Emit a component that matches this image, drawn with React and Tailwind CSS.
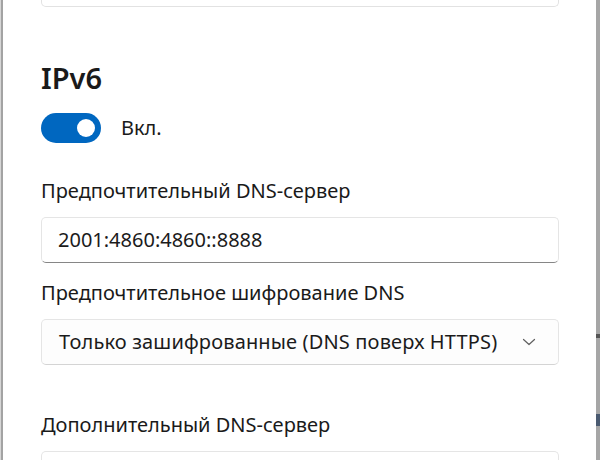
import React from 'react';

const font = { fontFamily: '"Noto Sans", "Open Sans", sans-serif' };

const Toggle = ({ on }) => (
  <div className={`relative w-[60px] h-[30px] rounded-full ${on ? 'bg-[#0067c0]' : 'bg-white border border-[#8a8a8a]'}`}>
    <div className="absolute top-[6px] right-[6px] w-[18px] h-[18px] rounded-full bg-white" />
  </div>
);

const Label = ({ children, className = '' }) => (
  <div className={`shrink-0 h-[28px] leading-[28px] text-[20px] text-[#1a1a1a] ${className}`}>{children}</div>
);

const TextBox = ({ value, className = '' }) => (
  <div className={`shrink-0 h-[46px] rounded-[5px] bg-white border border-[#e5e5e5] border-b-[#868686] flex items-center pl-[16px] text-[20px] text-[#1b1b1b] ${className}`}>
    {value}
  </div>
);

export default function App() {
  return (
    <div className="w-[600px] h-[460px] flex bg-white overflow-hidden" style={font}>
      <div className="w-[3px] h-full bg-[#a3a3a3] border-l border-[#d6d6d6]" />
      <div className="flex-1 flex flex-col pl-[38px] pr-[37px]">
        <div className="shrink-0 h-[7px] rounded-b-[5px] border-x border-b border-[#e2e2e2] bg-white" />

        <h2 className="shrink-0 mt-[51px] h-10 leading-10 text-[29px] font-semibold text-[#1a1a1a]">IPv6</h2>

        <div className="shrink-0 mt-[15px] flex items-center gap-[20px]">
          <Toggle on />
          <span className="text-[20px] text-[#1a1a1a]">Вкл.</span>
        </div>

        <Label className="mt-[34px]">Предпочтительный DNS-сервер</Label>
        <TextBox className="mt-[12px]" value="2001:4860:4860::8888" />

        <Label className="mt-[16px]">Предпочтительное шифрование DNS</Label>
        <div className="shrink-0 mt-[12px] h-[46px] rounded-[5px] bg-[#fdfdfd] border border-[#e5e5e5] border-b-[#d4d4d4] flex items-center justify-between pl-[17px] pr-[22px] text-[20px] text-[#1b1b1b]">
          <span className="tracking-[0.15px]">Только зашифрованные (DNS поверх HTTPS)</span>
          <svg width="14" height="8" viewBox="0 0 14 8" fill="none">
            <path d="M1.5 1.5 L7 6.5 L12.5 1.5" stroke="#606060" strokeWidth="1.2" strokeLinecap="round" strokeLinejoin="round" />
          </svg>
        </div>

        <Label className="mt-[46px]">Дополнительный DNS-сервер</Label>
        <div className="shrink-0 mt-[12px] h-[46px] rounded-t-[5px] bg-white border-x border-t border-[#e5e5e5]" />
      </div>
      <div className="w-[4px] h-full bg-[#a6a6a6] flex flex-col">
        <div className="mt-[334px] h-[4px] bg-[#555]" />
        <div className="mt-[76px] h-[12px] bg-[#4a5a70]" />
      </div>
    </div>
  );
}
